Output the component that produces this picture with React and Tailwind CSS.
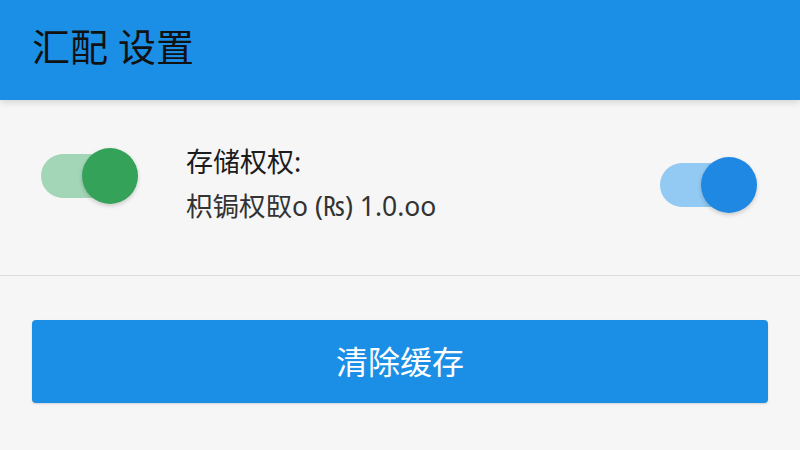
import React, { useState } from 'react'

function Toggle({ on, onChange, track, thumb, className }) {
  return (
    <button
      onClick={() => onChange(!on)}
      className={`relative h-[57px] w-[97px] shrink-0 ${className}`}
      aria-pressed={on}
    >
      <span className={`absolute left-0 top-[6px] h-[44px] w-[90px] rounded-full ${track}`} />
      <span
        className={`absolute top-0 right-0 h-[56px] w-[56px] rounded-full shadow-[0_2px_4px_rgba(0,0,0,0.18)] ${thumb}`}
      />
    </button>
  )
}

export default function App() {
  const [storage, setStorage] = useState(true)
  const [sync, setSync] = useState(true)

  return (
    <div
      className="flex h-[450px] w-[800px] flex-col overflow-hidden bg-[#f6f6f6]"
      style={{ fontFamily: '"Noto Sans", "Noto Sans CJK SC", sans-serif' }}
    >
      {/* header */}
      <header className="flex h-[100px] shrink-0 items-center bg-[#1b8fe5] px-[32px] pb-[8px] shadow-[0_3px_6px_rgba(0,0,0,0.12)]">
        <h1 className="text-[38px] font-normal leading-none text-[#111]">汇配 设置</h1>
      </header>

      {/* settings row */}
      <div className="flex h-[176px] shrink-0 items-center border-b border-[#dcdcdc] pl-[41px] pr-[43px]">
        <Toggle
          on={storage}
          onChange={setStorage}
          track="bg-[#a3d6b6]"
          thumb="bg-[#34a259]"
          className="mt-[-22px]"
        />
        <div className="ml-[48px] mt-[-8px] flex flex-1 flex-col">
          <span className="text-[27px] leading-[45px] text-[#1c1c1c]">存储权权:</span>
          <span className="text-[26.5px] leading-[45px] text-[#333]">枳锔权臤o (₨) 1.0.oo</span>
        </div>
        <Toggle
          on={sync}
          onChange={setSync}
          track="bg-[#93caf3]"
          thumb="bg-[#1e88e2]"
          className="mt-[-4px]"
        />
      </div>

      {/* button */}
      <div className="px-[32px] pt-[44px]">
        <button className="flex h-[83px] w-full items-center justify-center rounded-[4px] bg-[#1b8fe5] text-[32px] text-white shadow-[0_1px_2px_rgba(0,0,0,0.15)]">
          清除缓存
        </button>
      </div>
    </div>
  )
}
